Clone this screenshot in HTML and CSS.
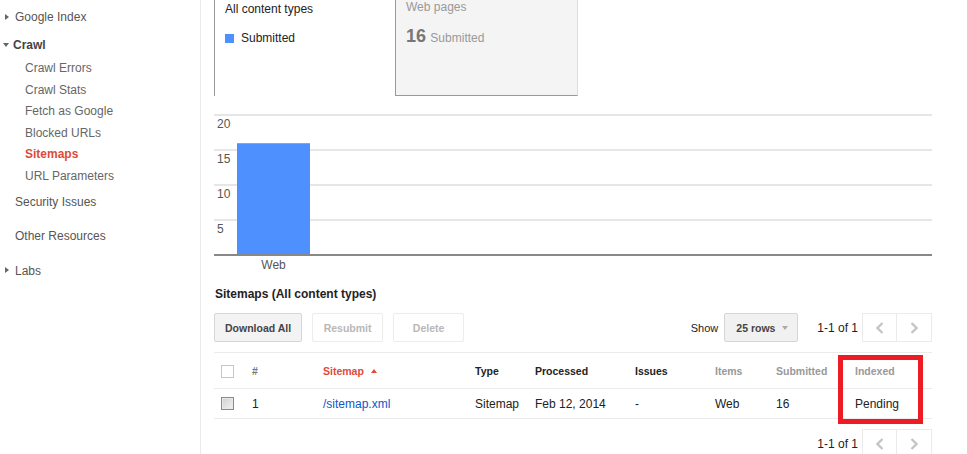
FILE: index.html
```html
<!DOCTYPE html>
<html lang="en">
<head>
    <meta charset="UTF-8">
    <meta name="viewport" content="width=device-width, initial-scale=1.0">
    <title>Sitemaps - Webmaster Tools</title>
    <link rel="stylesheet" href="styles.css">
</head>
<body>
    <div class="page">
        <!-- 左侧导航 -->
        <div class="sidebar">
            <a class="nav-top closed" href="#">Google Index</a>
            <a class="nav-top open nav-crawl" href="#">Crawl</a>
            <div class="nav-sub">
                <a href="#">Crawl Errors</a>
                <a href="#">Crawl Stats</a>
                <a href="#">Fetch as Google</a>
                <a href="#">Blocked URLs</a>
                <a class="active" href="#">Sitemaps</a>
                <a href="#">URL Parameters</a>
            </div>
            <a class="nav-top nav-security" href="#">Security Issues</a>
            <a class="nav-top nav-other" href="#">Other Resources</a>
            <a class="nav-top closed nav-labs" href="#">Labs</a>
        </div>

        <div class="main">
            <!-- 类型标签 -->
            <div class="summary">
                <div class="tab tab-active">
                    <div class="tab-title">All content types</div>
                    <div class="legend"><span class="swatch"></span>Submitted</div>
                </div>
                <div class="tab tab-web">
                    <div class="tab-title">Web pages</div>
                    <div class="tab-count"><b>16</b> Submitted</div>
                </div>
            </div>

            <!-- 图表 -->
            <div class="chart">
                <div class="grid-row"><span>20</span></div>
                <div class="grid-row"><span>15</span></div>
                <div class="grid-row"><span>10</span></div>
                <div class="grid-row"><span>5</span></div>
                <div class="bar" style="height: 111px"></div>
            </div>
            <div class="x-labels"><span>Web</span></div>

            <h3 class="section-title">Sitemaps (All content types)</h3>

            <div class="toolbar">
                <button class="btn">Download All</button>
                <button class="btn" disabled>Resubmit</button>
                <button class="btn" disabled>Delete</button>
                <div class="toolbar-right">
                    <span class="show">Show</span>
                    <div class="select">25 rows <span class="caret"></span></div>
                    <span class="range">1-1 of 1</span>
                    <div class="pager">
                        <button class="page-btn"><svg width="8" height="12" viewBox="0 0 8 12"><polyline points="6.5,1 1.5,6 6.5,11" /></svg></button>
                        <button class="page-btn"><svg width="8" height="12" viewBox="0 0 8 12"><polyline points="1.5,1 6.5,6 1.5,11" /></svg></button>
                    </div>
                </div>
            </div>

            <div class="table-wrap">
                <table class="sitemaps">
                    <colgroup>
                        <col style="width: 31px">
                        <col style="width: 71px">
                        <col style="width: 152px">
                        <col style="width: 60px">
                        <col style="width: 100px">
                        <col style="width: 80px">
                        <col style="width: 61px">
                        <col style="width: 79px">
                        <col style="width: 84px">
                    </colgroup>
                    <thead>
                        <tr>
                            <th><span class="check"></span></th>
                            <th class="muted-dark">#</th>
                            <th class="sorted">Sitemap <span class="sort-up"></span></th>
                            <th>Type</th>
                            <th>Processed</th>
                            <th>Issues</th>
                            <th class="muted">Items</th>
                            <th class="muted">Submitted</th>
                            <th class="muted">Indexed</th>
                        </tr>
                    </thead>
                    <tbody>
                        <tr>
                            <td><span class="check check-row"></span></td>
                            <td>1</td>
                            <td><a href="#">/sitemap.xml</a></td>
                            <td>Sitemap</td>
                            <td>Feb 12, 2014</td>
                            <td>-</td>
                            <td>Web</td>
                            <td>16</td>
                            <td>Pending</td>
                        </tr>
                    </tbody>
                </table>
                <div class="highlight"></div>
            </div>

            <div class="footer-pager">
                <span class="range">1-1 of 1</span>
                <div class="pager">
                    <button class="page-btn"><svg width="8" height="12" viewBox="0 0 8 12"><polyline points="6.5,1 1.5,6 6.5,11" /></svg></button>
                    <button class="page-btn"><svg width="8" height="12" viewBox="0 0 8 12"><polyline points="1.5,1 6.5,6 1.5,11" /></svg></button>
                </div>
            </div>
        </div>
    </div>
</body>
</html>
```

FILE: styles.css
```css
body {
    margin: 0;
    font-family: "Liberation Sans", Arial, sans-serif;
    font-size: 12px;
    color: #222;
    background: #fff;
    overflow: hidden;
}
.page {
    display: flex;
    min-height: 100vh;
}

/* 侧栏 */
.sidebar {
    width: 200px;
    flex-shrink: 0;
    border-right: 1px solid #ebebeb;
    padding-top: 6px;
}
.sidebar a {
    display: block;
    text-decoration: none;
    line-height: 22px;
    color: #555;
}
.nav-top {
    padding-left: 15px;
}
.nav-top.closed,
.nav-top.open {
    padding-left: 4px;
}
.closed::before {
    content: '';
    display: inline-block;
    vertical-align: middle;
    margin: -2px 6px 0 1px;
    border-left: 4px solid #666;
    border-top: 3.5px solid transparent;
    border-bottom: 3.5px solid transparent;
}
.open::before {
    content: '';
    display: inline-block;
    vertical-align: middle;
    margin: -2px 4px 0 -1px;
    border-top: 4px solid #666;
    border-left: 3.5px solid transparent;
    border-right: 3.5px solid transparent;
}
.nav-crawl {
    margin-top: 6px;
}
.sidebar .nav-crawl {
    font-weight: bold;
    color: #444;
}
.nav-sub {
    margin-top: 2px;
}
.sidebar .nav-sub a {
    padding-left: 25px;
    line-height: 21.6px;
    color: #666;
}
.sidebar .nav-sub a.active {
    color: #dd4b39;
    font-weight: bold;
}
.nav-security {
    margin-top: 3px;
}
.nav-other {
    margin-top: 12px;
}
.nav-labs {
    margin-top: 13px;
}

/* 主内容 */
.main {
    margin-left: 13px;
    width: 718px;
}
.summary {
    display: flex;
    height: 96px;
}
.tab {
    box-sizing: border-box;
    height: 96px;
    padding: 1px 10px 0;
    border-left: 1px solid #999;
}
.tab-active {
    width: 181px;
}
.tab-web {
    width: 183px;
    padding-top: 0;
    background: #f4f4f4;
    border-right: 1px solid #ddd;
    border-bottom: 1px solid #999;
}
.tab-title {
    line-height: 16px;
    color: #222;
}
.tab-web .tab-title {
    line-height: 14px;
    color: #999;
}
.legend {
    display: flex;
    align-items: center;
    margin-top: 13px;
    line-height: 16px;
}
.swatch {
    width: 9px;
    height: 9px;
    background: #4d90fe;
    margin-right: 7px;
}
.tab-count {
    margin-top: 11px;
    line-height: 22px;
    color: #999;
}
.tab-count b {
    font-size: 18px;
    color: #777;
    margin-right: 1px;
}

/* 图表 */
.chart {
    position: relative;
    margin-top: 18px;
    border-bottom: 2px solid #888;
}
.grid-row {
    height: 33px;
    border-top: 2px solid #e6e6e6;
}
.grid-row span {
    display: block;
    padding: 1px 0 0 3px;
    line-height: 14px;
    color: #555;
}
.bar {
    position: absolute;
    left: 23px;
    bottom: 0;
    width: 73px;
    box-sizing: border-box;
    background: #4d90fe;
    border-top: 1px solid #76a9fc;
}
.x-labels {
    padding-left: 23px;
}
.x-labels span {
    display: block;
    width: 73px;
    text-align: center;
    line-height: 17px;
    padding-top: 1px;
    color: #555;
}

.section-title {
    margin: 12px 0 0 1px;
    font-size: 12px;
    line-height: 16px;
    font-weight: bold;
    color: #222;
}

/* 工具栏 */
.toolbar {
    display: flex;
    align-items: center;
    margin-top: 11px;
    height: 29px;
}
.btn {
    height: 29px;
    min-width: 71px;
    padding: 0 10px;
    margin-right: 10px;
    border: 1px solid #d6d6d6;
    border-radius: 2px;
    background: #f3f3f3;
    font-family: inherit;
    font-size: 10.5px;
    font-weight: bold;
    color: #444;
}
.btn:disabled {
    background: #fff;
    border-color: #ececec;
    color: #b8b8b8;
}
.toolbar-right {
    margin-left: auto;
    display: flex;
    align-items: center;
}
.show {
    font-size: 11px;
    color: #222;
    margin-right: 6px;
}
.select {
    box-sizing: border-box;
    display: flex;
    align-items: center;
    width: 74px;
    height: 29px;
    padding-left: 11px;
    border: 1px solid #d6d6d6;
    border-radius: 2px;
    background: #f1f1f1;
    font-size: 10.5px;
    font-weight: bold;
    color: #444;
    margin-right: 19px;
}
.caret {
    margin-left: 7px;
    border-top: 4px solid #aaa;
    border-left: 3.5px solid transparent;
    border-right: 3.5px solid transparent;
}
.range {
    font-size: 12px;
    color: #222;
    margin-right: 4px;
}
.pager {
    display: flex;
}
.page-btn {
    box-sizing: border-box;
    width: 35px;
    height: 29px;
    padding: 0;
    display: flex;
    align-items: center;
    justify-content: center;
    border: 1px solid #ebebeb;
    background: #fff;
}
.page-btn + .page-btn {
    border-left: none;
}
.page-btn polyline {
    fill: none;
    stroke: #c4c4c4;
    stroke-width: 2.3;
}

/* 表格 */
.table-wrap {
    position: relative;
    margin-top: 10px;
}
.sitemaps {
    width: 100%;
    table-layout: fixed;
    border-collapse: collapse;
    border-top: 1px solid #ebebeb;
}
.sitemaps th {
    height: 34px;
    padding: 1px 0 0 7px;
    text-align: left;
    font-size: 10.5px;
    font-weight: bold;
    color: #222;
    border-bottom: 1px solid #ebebeb;
}
.sitemaps th.muted {
    color: #999;
}
.sitemaps th.muted-dark {
    color: #777;
}
.sitemaps th.sorted {
    color: #dd4b39;
}
.sort-up {
    display: inline-block;
    vertical-align: middle;
    margin: -3px 0 0 4px;
    border-bottom: 4px solid #dd4b39;
    border-left: 3.5px solid transparent;
    border-right: 3.5px solid transparent;
}
.sitemaps td {
    height: 29px;
    padding: 0 0 0 7px;
    border-bottom: 1px solid #ebebeb;
    color: #222;
}
.sitemaps td a {
    color: #15c;
    text-decoration: none;
}
.check {
    display: block;
    box-sizing: border-box;
    width: 13px;
    height: 13px;
    border: 1px solid #c6c6c6;
    background: #fff;
}
.check-row {
    border-color: #8a8a8a;
    background: linear-gradient(135deg, #cfcfcf, #f3f3f3);
    box-shadow: inset 0 0 0 1px #e9e9e9;
}
.highlight {
    position: absolute;
    top: 3px;
    left: 624px;
    width: 85px;
    height: 69px;
    box-sizing: border-box;
    border: 5px solid #ed1c24;
}

.footer-pager {
    display: flex;
    justify-content: flex-end;
    align-items: center;
    margin-top: 10px;
}
```
